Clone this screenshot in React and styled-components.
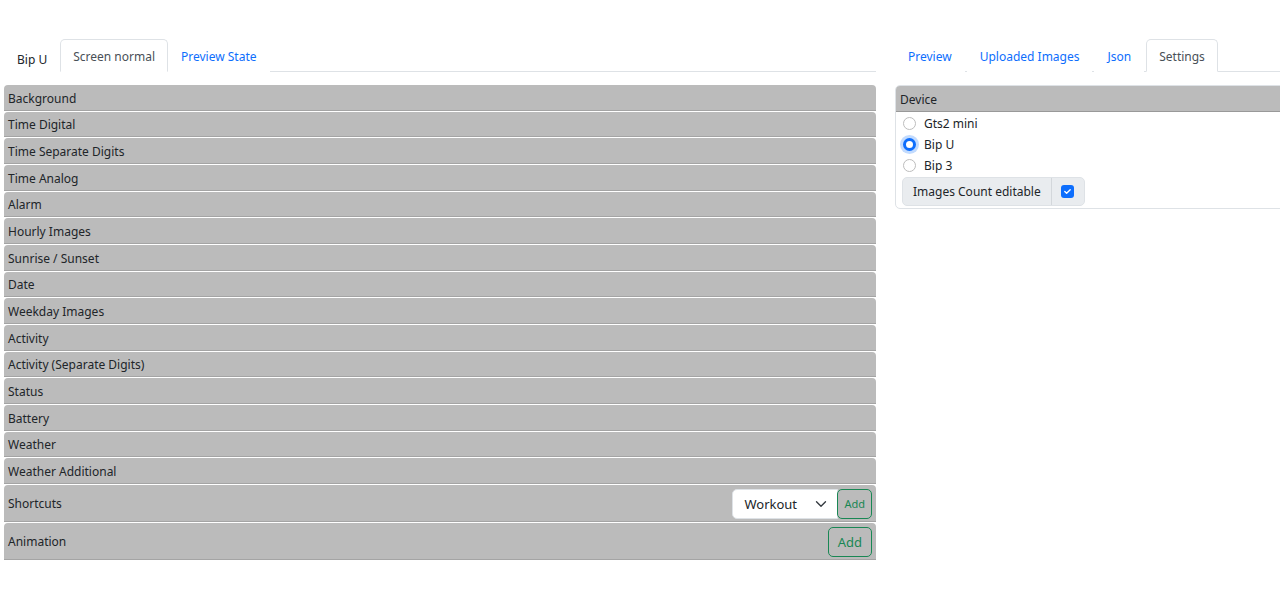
import { createGlobalStyle, styled } from "styled-components";

const GlobalStyle = createGlobalStyle`
  html, body {
    margin: 0;
    padding: 0;
    background: #fff;
    overflow: hidden;
  }
  body {
    font-family: "Noto Sans", "Open Sans", sans-serif;
    font-size: 12px;
    color: #212529;
  }
`;

const Page = styled.div`
  display: grid;
  grid-template-columns: 872px 420px;
  column-gap: 19px;
  padding: 39px 0 0 4px;
  width: 1320px;
`;

const Column = styled.div`
  display: flex;
  flex-direction: column;
  min-width: 0;
`;

const Tabs = styled.nav`
  display: flex;
  align-items: flex-end;
  gap: ${(p) => p.$gap ?? 2}px;
  border-bottom: 1px solid #dee2e6;
  margin-bottom: 13px;
`;

const Tab = styled.span`
  display: block;
  padding: 0 12px;
  padding-top: ${(p) => (p.$low ? 10 : 7)}px;
  padding-bottom: ${(p) => (p.$low ? 1 : 4)}px;
  line-height: 20px;
  margin-bottom: -1px;
  border: 1px solid ${(p) => (p.$active ? "#dee2e6" : "transparent")};
  border-bottom-color: ${(p) => (p.$active ? "#fff" : "transparent")};
  border-radius: 5px 5px 0 0;
  background: #fff;
  color: ${(p) => (p.$link ? "#0d6efd" : p.$active ? "#495057" : "#212529")};
`;

const Section = styled.div`
  display: flex;
  align-items: center;
  justify-content: space-between;
  background: #bbb;
  border-radius: 4px 4px 0 0;
  border-bottom: 1px solid #a4a4a4;
  margin-bottom: 1px;
  padding: ${(p) => (p.$tall ? "4px 4px 2px" : "3.83px 4px 0.83px")};
  line-height: 20px;
`;

const Controls = styled.div`
  display: flex;
  align-items: stretch;
  height: 30px;
`;

const Select = styled.div`
  display: flex;
  align-items: center;
  justify-content: space-between;
  width: 106px;
  box-sizing: border-box;
  padding: 0 10px 0 11px;
  background: #fff;
  border: 1px solid #dee2e6;
  border-radius: 5px 0 0 5px;
  font-size: 13px;
`;

const AddButton = styled.button`
  font-family: inherit;
  font-size: ${(p) => (p.$small ? "11px" : "13px")};
  color: #198754;
  background: transparent;
  border: 1px solid #198754;
  border-radius: 5px;
  padding: 0 ${(p) => (p.$small ? "6px" : "9px")};
  margin-left: ${(p) => (p.$small ? "-1px" : 0)};
`;

const Card = styled.div`
  border: 1px solid #dee2e6;
  border-radius: 5px;
  overflow: hidden;
`;

const CardHeader = styled.div`
  background: #bbb;
  border-bottom: 1px solid #999;
  padding: 3.83px 4px 0.83px;
  line-height: 20px;
`;

const CardBody = styled.div`
  padding: 1px 6px 2px 6px;
`;

const RadioRow = styled.label`
  display: flex;
  align-items: center;
  gap: 8px;
  height: 21px;
`;

const Radio = styled.span`
  width: 13px;
  height: 13px;
  box-sizing: border-box;
  border-radius: 50%;
  border: ${(p) => (p.$checked ? "3.5px solid #0d6efd" : "1px solid #bdbdbd")};
  background: #fff;
  box-shadow: ${(p) => (p.$checked ? "0 0 0 3px rgba(13,110,253,0.25)" : "none")};
  margin-left: 1px;
`;

const InputGroup = styled.div`
  display: inline-flex;
  align-self: flex-start;
  height: 29px;
  box-sizing: border-box;
  margin-top: 1px;
  border: 1px solid #dee2e6;
  border-radius: 5px;
  background: #e9ecef;
  overflow: hidden;
`;

const GroupText = styled.span`
  display: flex;
  align-items: center;
  padding: 1px 10px 0;
`;

const GroupCheck = styled.span`
  display: flex;
  align-items: center;
  justify-content: center;
  width: 32px;
  border-left: 1px solid #d3d7db;
`;

const Check = styled.span`
  width: 13px;
  height: 13px;
  border-radius: 3px;
  background: #0d6efd;
  display: flex;
  align-items: center;
  justify-content: center;
`;

const sections = [
  "Background",
  "Time Digital",
  "Time Separate Digits",
  "Time Analog",
  "Alarm",
  "Hourly Images",
  "Sunrise / Sunset",
  "Date",
  "Weekday Images",
  "Activity",
  "Activity (Separate Digits)",
  "Status",
  "Battery",
  "Weather",
  "Weather Additional",
];

const devices = ["Gts2 mini", "Bip U", "Bip 3"];

export default function App() {
  return (
    <>
      <GlobalStyle />
      <Page>
        <Column>
          <Tabs $gap={0}>
            <Tab $low>Bip U</Tab>
            <Tab $active>Screen normal</Tab>
            <Tab $link>Preview State</Tab>
          </Tabs>
          {sections.map((name) => (
            <Section key={name}>{name}</Section>
          ))}
          <Section $tall>
            Shortcuts
            <Controls>
              <Select>
                Workout
                <svg width="12" height="12" viewBox="0 0 16 16" fill="none">
                  <path d="M2 5l6 6 6-6" stroke="#343a40" strokeWidth="1.8" strokeLinecap="round" strokeLinejoin="round" />
                </svg>
              </Select>
              <AddButton $small>Add</AddButton>
            </Controls>
          </Section>
          <Section $tall>
            Animation
            <Controls>
              <AddButton>Add</AddButton>
            </Controls>
          </Section>
        </Column>
        <Column>
          <Tabs>
            <Tab $link>Preview</Tab>
            <Tab $link>Uploaded Images</Tab>
            <Tab $link>Json</Tab>
            <Tab $active>Settings</Tab>
          </Tabs>
          <Card>
            <CardHeader>Device</CardHeader>
            <CardBody>
              {devices.map((d) => (
                <RadioRow key={d}>
                  <Radio $checked={d === "Bip U"} />
                  {d}
                </RadioRow>
              ))}
              <InputGroup>
                <GroupText>Images Count editable</GroupText>
                <GroupCheck>
                  <Check>
                    <svg width="9" height="9" viewBox="0 0 20 20" fill="none">
                      <path d="M4 10l4 4 8-8" stroke="#fff" strokeWidth="3" strokeLinecap="round" strokeLinejoin="round" />
                    </svg>
                  </Check>
                </GroupCheck>
              </InputGroup>
            </CardBody>
          </Card>
        </Column>
      </Page>
    </>
  );
}
